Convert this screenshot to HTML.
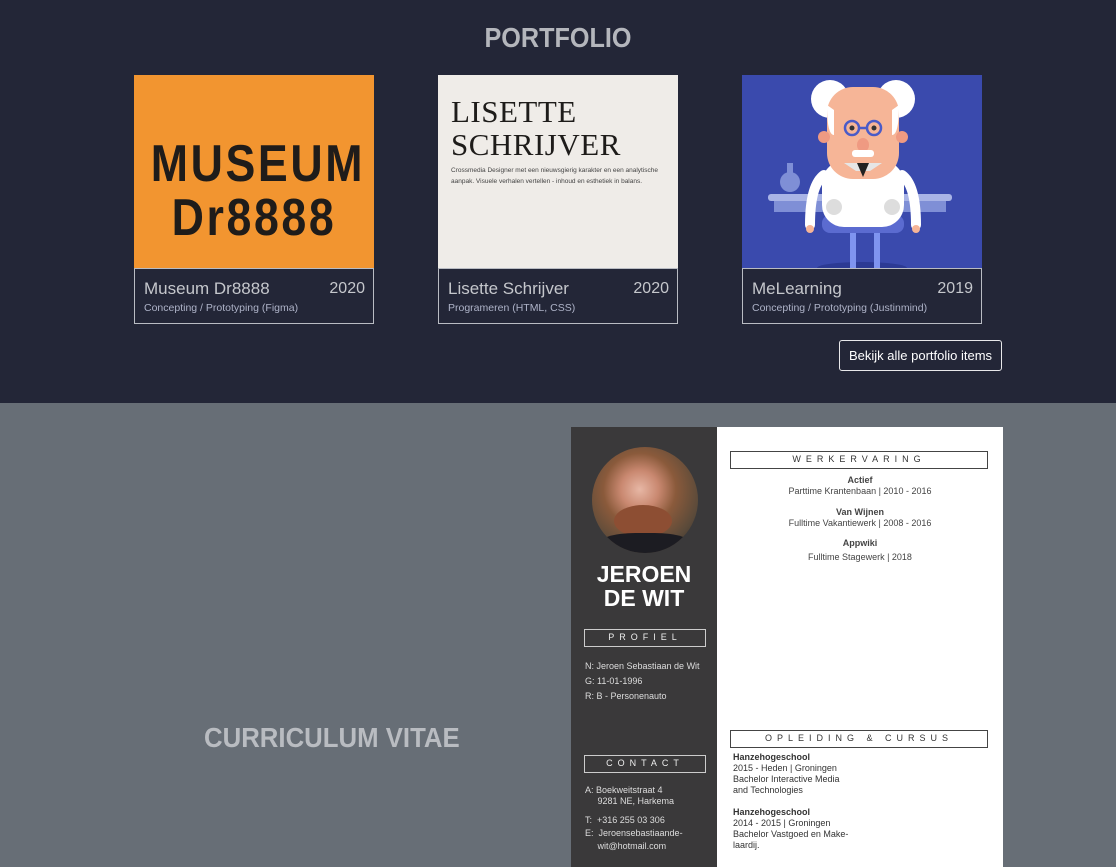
<!DOCTYPE html>
<html><head><meta charset="utf-8"><style>
*{margin:0;padding:0;box-sizing:border-box}
body{width:1116px;height:867px;overflow:hidden;font-family:"Liberation Sans",sans-serif;background:#676e76}
.top{position:absolute;left:0;top:0;width:1116px;height:403px;background:#232637}
h1{position:absolute;top:22px;left:0;width:1116px;text-align:center;font:bold 28px "Liberation Sans",sans-serif;color:#b4b6bc;transform:scaleX(0.9)}
.card{position:absolute;top:75px;width:240px;height:249px}
.img{position:absolute;left:0;top:0;width:240px;height:193px;overflow:hidden}
.cap{position:absolute;left:0;top:193px;width:240px;height:56px;border:1px solid #b9bcc3;color:#c5c7cc}
.cap .t{position:absolute;left:9px;top:10px;font-size:17px}
.cap .y{position:absolute;right:8px;top:11px;font-size:16px}
.cap .s{position:absolute;left:9px;top:33px;font-size:10.5px;color:#aeb3c8}
.btn{position:absolute;left:839px;top:340px;width:163px;height:31px;border:1px solid #e8e8ea;border-radius:3px;color:#fff;font-size:13px;text-align:center;line-height:29px}
.cvt{position:absolute;left:204px;top:722px;width:253px;font:bold 28px "Liberation Sans",sans-serif;color:#b9bcc1;transform:scaleX(0.92);transform-origin:left;white-space:nowrap}
.cv{position:absolute;left:571px;top:427px;width:432px;height:440px;background:#fff;font-family:"Liberation Sans",sans-serif}
.side{position:absolute;left:0;top:0;width:146px;height:440px;background:#3a393a;color:#ddd}
.box{position:absolute;border:1.5px solid #ccc;text-align:center;font-size:9px;letter-spacing:5px;line-height:15px;height:18px}
.side .box{left:13px;width:122px;color:#eee}
.main .box{left:159px;width:258px;border-color:#444;color:#333}
.sm{font-size:9px;position:absolute}
</style></head><body>
<div class="top">
<h1>PORTFOLIO</h1>
<div class="card" style="left:134px">
 <div class="img" style="background:#f29530;color:#1f1c1a">
  <div style="position:absolute;left:0;top:62px;width:240px;text-align:center;font:bold 52px 'Liberation Sans',sans-serif;line-height:54px;letter-spacing:3px;transform:scaleX(0.86)">MUSEUM<br>Dr8888</div>
 </div>
 <div class="cap"><span class="t">Museum Dr8888</span><span class="y">2020</span><span class="s">Concepting / Prototyping (Figma)</span></div>
</div>
<div class="card" style="left:438px">
 <div class="img" style="background:#efece8;color:#1e1c1a">
  <div style="position:absolute;left:13px;top:20px;font:31px 'Liberation Serif',serif;line-height:33px;letter-spacing:0.5px">LISETTE<br>SCHRIJVER</div>
  <div style="position:absolute;left:13px;top:90px;font-size:6.5px;line-height:11px;color:#444;width:225px">Crossmedia Designer met een nieuwsgierig karakter en een analytische aanpak. Visuele verhalen vertellen - inhoud en esthetiek in balans.</div>
 </div>
 <div class="cap"><span class="t">Lisette Schrijver</span><span class="y">2020</span><span class="s">Programeren (HTML, CSS)</span></div>
</div>
<div class="card" style="left:742px">
 <div class="img" style="background:#3a4aad">
  <svg width="240" height="193">
   <ellipse cx="120" cy="193" rx="45" ry="6" fill="#2c3a94"/>
   <rect x="26" y="119" width="184" height="7" rx="3" fill="#a9b4e6"/>
   <rect x="32" y="126" width="172" height="11" fill="#7f8fd6"/>
   <circle cx="48" cy="107" r="10" fill="#7f8fd6"/><rect x="45" y="88" width="6" height="12" fill="#7f8fd6"/>
   <rect x="108" y="150" width="6" height="43" fill="#7f94f0"/><rect x="132" y="150" width="6" height="43" fill="#7f94f0"/>
   <path d="M82 100 Q68 110 68 150" stroke="#fff" stroke-width="10" fill="none" stroke-linecap="round"/>
   <path d="M160 100 Q174 110 174 150" stroke="#fff" stroke-width="10" fill="none" stroke-linecap="round"/>
   <circle cx="68" cy="154" r="4" fill="#f6b597"/><circle cx="174" cy="154" r="4" fill="#f6b597"/>
   <rect x="80" y="140" width="82" height="18" rx="8" fill="#5b6bd0"/>
   <rect x="80" y="86" width="82" height="66" rx="22" fill="#fff"/>
   <circle cx="92" cy="132" r="8" fill="#ddd"/><circle cx="150" cy="132" r="8" fill="#ddd"/>
   <circle cx="88" cy="24" r="19" fill="#fff"/><circle cx="154" cy="24" r="19" fill="#fff"/>
   <rect x="85" y="12" width="72" height="92" rx="26" fill="#f6b597"/>
   <circle cx="82" cy="62" r="6" fill="#ef9a82"/><circle cx="160" cy="62" r="6" fill="#ef9a82"/>
   <path d="M85 30 Q85 60 92 60 L92 35 Z M157 30 Q157 60 150 60 L150 35Z" fill="#fff"/>
   <circle cx="110" cy="53" r="7" fill="none" stroke="#4a5bc8" stroke-width="2.5"/><circle cx="132" cy="53" r="7" fill="none" stroke="#4a5bc8" stroke-width="2.5"/>
   <line x1="117" y1="53" x2="125" y2="53" stroke="#4a5bc8" stroke-width="2.5"/>
   <circle cx="110" cy="53" r="2.5" fill="#333"/><circle cx="132" cy="53" r="2.5" fill="#333"/>
   <ellipse cx="121" cy="70" rx="6" ry="7" fill="#ef9a82"/>
   <rect x="110" y="75" width="22" height="7" rx="3" fill="#fff"/>
   <path d="M102 88 L140 88 L128 96 L114 96Z" fill="#e6e6e6"/>
   <path d="M115 88 L127 88 L121 102Z" fill="#222"/>
  </svg>
 </div>
 <div class="cap"><span class="t">MeLearning</span><span class="y">2019</span><span class="s">Concepting / Prototyping (Justinmind)</span></div>
</div>
<div class="btn">Bekijk alle portfolio items</div>
</div>
<div class="cvt">CURRICULUM VITAE</div>
<div class="cv">
 <div class="side">
  <div style="position:absolute;left:21px;top:20px;width:106px;height:106px;border-radius:50%;background:radial-gradient(circle at 45% 40%,#e7b7a5 0,#c98870 22%,#8a5a3b 42%,#5a4a3a 70%,#2a2520 100%);overflow:hidden">
   <div style="position:absolute;left:22px;top:58px;width:58px;height:32px;background:#8d4e33;border-radius:50%"></div>
   <div style="position:absolute;left:5px;top:86px;width:96px;height:30px;background:#1c1c22;border-radius:40%"></div>
  </div>
  <div style="position:absolute;left:0;top:135px;width:146px;text-align:center;color:#fff;font:bold 23px 'Liberation Sans',sans-serif;line-height:24px">JEROEN<br>DE WIT</div>
  <div class="box" style="top:202px">PROFIEL</div>
  <div class="sm" style="left:14px;top:232px;line-height:15px">N:&nbsp;Jeroen Sebastiaan de Wit<br>G:&nbsp;11-01-1996<br>R:&nbsp;B - Personenauto</div>
  <div class="box" style="top:328px">CONTACT</div>
  <div class="sm" style="left:14px;top:358px;line-height:11px">A:&nbsp;Boekweitstraat 4<br>&nbsp;&nbsp;&nbsp;&nbsp;&nbsp;9281 NE, Harkema</div>
  <div class="sm" style="left:14px;top:387px;line-height:13px">T:&nbsp;&nbsp;+316 255 03 306<br>E:&nbsp;&nbsp;Jeroensebastiaande-<br>&nbsp;&nbsp;&nbsp;&nbsp;&nbsp;wit@hotmail.com</div>
 </div>
 <div class="main">
  <div class="box" style="top:24px">WERKERVARING</div>
  <div style="position:absolute;left:146px;width:286px;top:48px;text-align:center;font-size:9px;color:#444;line-height:11px">
   <b>Actief</b><br>Parttime Krantenbaan | 2010 - 2016<br><div style="height:10px"></div>
   <b>Van Wijnen</b><br>Fulltime Vakantiewerk | 2008 - 2016<br><div style="height:9px"></div>
   <b>Appwiki</b><br><div style="height:3px"></div>Fulltime Stagewerk | 2018
  </div>
  <div class="box" style="top:303px">OPLEIDING &amp; CURSUS</div>
  <div class="sm" style="left:162px;top:325px;line-height:11px;color:#333"><b>Hanzehogeschool</b><br>2015 - Heden | Groningen<br>Bachelor Interactive Media<br>and Technologies<br><br><b>Hanzehogeschool</b><br>2014 - 2015 | Groningen<br>Bachelor Vastgoed en Make-<br>laardij.</div>
 </div>
</div>
</body></html>
